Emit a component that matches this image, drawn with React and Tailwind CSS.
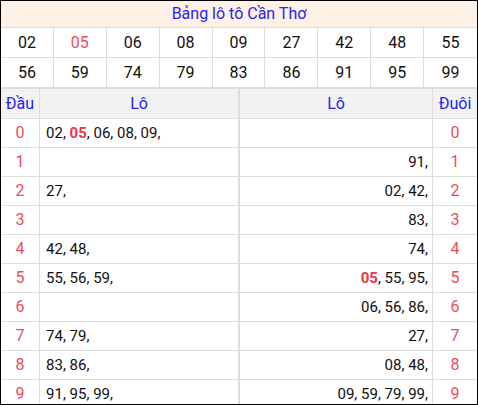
import React from 'react';

const row1 = ['02', '05', '06', '08', '09', '27', '42', '48', '55'];
const row2 = ['56', '59', '74', '79', '83', '86', '91', '95', '99'];
const special = ['05'];

const dau = [
  ['02', '05', '06', '08', '09'],
  [],
  ['27'],
  [],
  ['42', '48'],
  ['55', '56', '59'],
  [],
  ['74', '79'],
  ['83', '86'],
  ['91', '95', '99'],
];

const duoi = [
  [],
  ['91'],
  ['02', '42'],
  ['83'],
  ['74'],
  ['05', '55', '95'],
  ['06', '56', '86'],
  ['27'],
  ['08', '48'],
  ['09', '59', '79', '99'],
];

const NumList = ({ items }) => (
  <span>
    {items.map((n, i) => (
      <React.Fragment key={i}>
        {i > 0 && ' '}
        <span className={special.includes(n) ? 'font-bold text-[#f0344c]' : ''}>{n}</span>,
      </React.Fragment>
    ))}
  </span>
);

const NumberRow = ({ nums, last }) => (
  <div className={`grid grid-cols-9 ${last ? 'h-[31px] border-b-2' : 'h-[30px] border-b'} border-[#dddddd]`}>
    {nums.map((n, i) => (
      <div
        key={i}
        className={`flex items-center justify-center border-r border-[#dddddd] last:border-r-0 ${special.includes(n) ? 'text-[#f04a5c]' : 'text-[#111]'}`}
      >
        {n}
      </div>
    ))}
  </div>
);

export default function App() {
  return (
    <div
      className="w-[478px] h-[405px] overflow-hidden border border-black bg-white text-[16px]"
      style={{ fontFamily: 'Roboto, "Liberation Sans", sans-serif' }}
    >
      <div className="h-[27px] border-b border-[#dddddd] bg-[#fff1e6] text-center leading-[26px] text-[#2424f2]">
        Bảng lô tô Cần Thơ
      </div>
      <NumberRow nums={row1} />
      <NumberRow nums={row2} last />

      <div className="grid h-[30px] grid-cols-[39px_200px_193px_1fr] border-b border-[#dddddd] bg-[#f2f2f2] text-[#2424f2]">
        <div className="flex items-center justify-center border-r border-[#dddddd]">Đầu</div>
        <div className="flex items-center justify-center border-r-2 border-[#dddddd]">Lô</div>
        <div className="flex items-center justify-center border-r border-[#dddddd]">Lô</div>
        <div className="flex items-center justify-center">Đuôi</div>
      </div>

      {dau.map((left, i) => (
        <div key={i} className="grid h-[29px] grid-cols-[39px_200px_193px_1fr] border-b border-[#dddddd] text-[#111]">
          <div className="flex items-center justify-center border-r border-[#dddddd] text-[#f04a5c]">{i}</div>
          <div className="flex items-center border-r-2 border-[#dddddd] pl-[6px] text-[15px] whitespace-nowrap">
            <NumList items={left} />
          </div>
          <div className="flex items-center justify-end border-r border-[#dddddd] pr-[4px] text-[15px] whitespace-nowrap">
            <NumList items={duoi[i]} />
          </div>
          <div className="flex items-center justify-center text-[#f04a5c]">{i}</div>
        </div>
      ))}
    </div>
  );
}
